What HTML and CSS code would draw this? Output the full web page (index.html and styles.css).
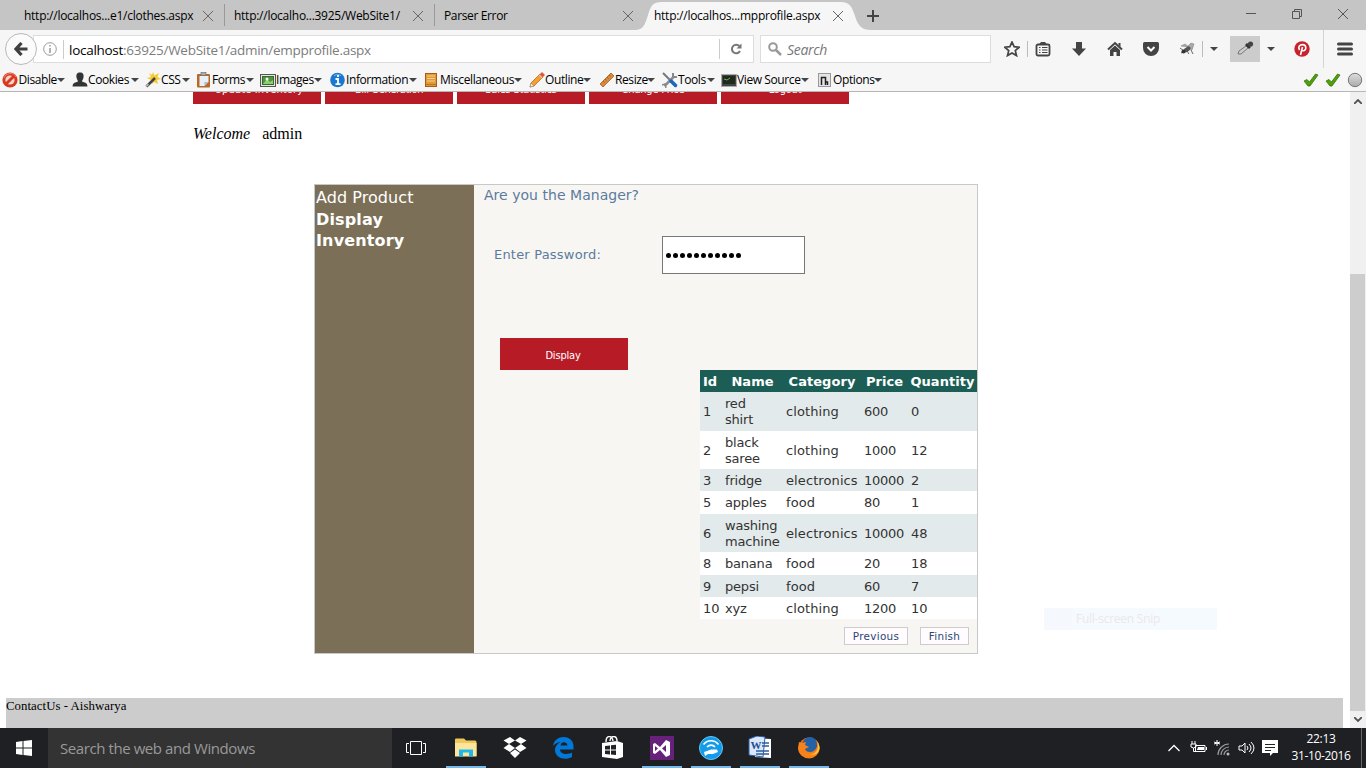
FILE: index.html
```html
<!DOCTYPE html>
<html lang="en">
<head>
<meta charset="utf-8">
<title>empprofile.aspx</title>
<link rel="stylesheet" href="styles.css">
</head>
<body>
<div class="screen">
<header class="tabs">
  <div class="tab t1"><span class="tt">http://localhos...e1/clothes.aspx</span><svg class="x" viewBox="0 0 10 10"><path d="M0 0l10 10M10 0L0 10"/></svg></div>
  <div class="tab t2"><span class="tt">http://localho...3925/WebSite1/</span><svg class="x" viewBox="0 0 10 10"><path d="M0 0l10 10M10 0L0 10"/></svg></div>
  <div class="tab t3"><span class="tt">Parser Error</span><svg class="x" viewBox="0 0 10 10"><path d="M0 0l10 10M10 0L0 10"/></svg></div>
  <div class="tab t4"><svg class="tabbg" viewBox="0 0 236 28"><path d="M0 28C8 28 10 23 13 13C16 3 18 0 27 0H205C216 0 217 6 220 14C223 24 227 28 236 28Z" fill="#f6f6f6"/></svg><span class="tt">http://localhos...mpprofile.aspx</span><svg class="x" viewBox="0 0 10 10"><path d="M0 0l10 10M10 0L0 10"/></svg></div>
  <svg class="plus" viewBox="0 0 12 12"><path d="M6 0v12M0 6h12" stroke="#444" stroke-width="2"/></svg>
  <div class="winbtns">
    <svg viewBox="0 0 10 12"><path d="M0 5.500h10"/></svg>
    <svg viewBox="0 0 10 12"><path d="M.5 3.500h7v7h-7zM2.500 3.500v-2h7v7h-2"/></svg>
    <svg viewBox="0 0 10 12"><path d="M0 1l10 10M10 1L0 11"/></svg>
  </div>
</header>
<div class="navbar">
  <div class="back"><svg viewBox="0 0 14 14"><path d="M7.500 1L2 7l5.500 6M2.500 7H13.500" fill="none" stroke="#404040" stroke-width="3.200"/></svg></div>
  <div class="url">
    <svg class="info" viewBox="0 0 14 14"><circle cx="7" cy="7" r="6.300" fill="none" stroke="#999"/><path d="M7 6v5M7 3v1.600" stroke="#888" stroke-width="1.300"/></svg>
    <span class="address"><b>localhost</b>:63925/WebSite1/admin/empprofile.aspx</span>
    <div class="reload"><svg viewBox="0 0 12 12"><path d="M9.500 3.200A4.300 4.300 0 1 0 10 8" fill="none" stroke="#777" stroke-width="2"/><path d="M11.500 .500v5h-5z" fill="#777"/></svg></div>
  </div>
  <div class="search"><svg viewBox="0 0 14 14"><circle cx="5" cy="5" r="3.800" fill="none" stroke="#999" stroke-width="2"/><path d="M8 8l5 5" stroke="#999" stroke-width="2.500"/></svg><i>Search</i></div>
  <div class="tools">
    <svg viewBox="0 0 16 16"><path d="M8 1l2.100 4.700 5.100.500-3.900 3.400 1.200 5L8 12l-4.500 2.600 1.200-5L.800 6.200l5.100-.500z" fill="none" stroke="#444" stroke-width="1.700"/></svg>
    <span class="vline"></span>
    <svg viewBox="0 0 16 16"><rect x="1.500" y="3.500" width="13" height="11" rx="1.500" fill="none" stroke="#444" stroke-width="1.800"/><path d="M4 3.500L6 1h4l2 2.500z" fill="#444"/><path d="M4 6.500h1.500M7 6.500h5.500M4 9h1.500M7 9h5.500M4 11.500h1.500M7 11.500h5.500" stroke="#444" stroke-width="1.200"/></svg>
    <svg viewBox="0 0 16 16"><path d="M5 1h6v6.500h4L8 15 1 7.500h4z" fill="#444"/></svg>
    <svg viewBox="0 0 16 16"><path d="M1 8.500L8 2l7 6.500" fill="none" stroke="#444" stroke-width="2"/><path d="M3 9l5-4.500L13 9v6H9.500v-4h-3v4H3zM11.500 2h2v4l-2-2z" fill="#444"/></svg>
    <svg viewBox="0 0 16 16"><path d="M1.500 1h13q1.500 0 1.500 1.500v4.500a8 8 0 0 1-16 0V2.500q0-1.500 1.500-1.500z" fill="#444"/><path d="M4.500 6L8 9.500 11.500 6" fill="none" stroke="#fff" stroke-width="2"/></svg>
    <svg viewBox="0 0 16 16"><path d="M8 6l4-4 3 1-2 6zM2 5l4-2 4 3z" fill="#aaa" stroke="#777" stroke-width=".5"/><ellipse cx="8" cy="8.500" rx="4" ry="2.200" transform="rotate(-35 8 8.500)" fill="#555"/><path d="M1 7l4 3M2 12l4-2M12 9l2 4M8 10l2 3" stroke="#555" stroke-width=".9"/><circle cx="4.500" cy="10.500" r="2" fill="#333"/></svg>
    <span class="vline"></span><span class="tri"></span>
    <div class="dropper"><svg viewBox="0 0 18 16"><path d="M2 13l1-3 7-5 2 2-7 6z" fill="#ccc" stroke="#777"/><path d="M10 3l4 4M11 5l4-3" stroke="#333" stroke-width="2.800"/><circle cx="14.500" cy="3" r="2.600" fill="#444"/></svg></div>
    <span class="tri"></span>
    <svg viewBox="0 0 16 16"><circle cx="8" cy="8" r="7.700" fill="#c8232c"/><path d="M5.600 9C3.500 5.500 6 3.600 8.500 3.600c4.500 0 4 6.200.8 6.200-1 0-1.500-.7-1.500-.7M8.500 6L6.500 14" fill="none" stroke="#fff" stroke-width="1.600"/></svg>
    <span class="vline long"></span>
    <svg viewBox="0 0 16 16"><path d="M1.500 3h13M1.500 8h13M1.500 13h13" stroke="#444" stroke-width="3" stroke-linecap="round"/></svg>
  </div>
</div>
<div class="devbar">
  <div class="dev"><svg viewBox="0 0 16 16"><circle cx="8" cy="8" r="7.600" fill="#d83920"/><circle cx="8" cy="8" r="4.600" fill="#f9d8cb"/><path d="M4 12l8-8" stroke="#d83920" stroke-width="3"/><path d="M2 6a6.500 6.500 0 0 1 12-1" fill="none" stroke="#f08a70"/></svg><span class="w1">Disable</span></div>
  <div class="dev"><svg viewBox="0 0 16 16"><path d="M8 .500c3 0 4 2 3.500 5C11 8 10 8.500 10 9.500l4 1.500q1.500 1 1.500 3.500H.500Q.500 12 2 11l4-1.500C6 8.500 5 8 4.500 5.500 4 2.500 5 .500 8 .500z" fill="#333"/></svg><span class="w2">Cookies</span></div>
  <div class="dev"><svg viewBox="0 0 16 16"><path d="M8 0l1.500 3.500L14 1l-1.500 4L16 7l-4 1 1 4-4-2-2 2-1-4-4-2 4-1-2-4 3 2z" fill="#f5c932"/><path d="M1.500 14.500L10 6" stroke="#444" stroke-width="2.500"/><path d="M1 14.500l2.500-2.500" stroke="#aaa" stroke-width="2"/></svg><span class="w3">CSS</span></div>
  <div class="dev"><svg viewBox="0 0 16 16"><rect x="1" y="2" width="13" height="13.500" rx="1" fill="#b7692c"/><path d="M3.500 4h9v6l-4 4h-5z" fill="#e9f0f5"/><path d="M8.500 14v-4h4z" fill="#abc"/><rect x="5" y=".5" width="5" height="3" fill="#aaa" stroke="#666" stroke-width=".6"/></svg><span class="w4">Forms</span></div>
  <div class="dev"><svg viewBox="0 0 16 16"><rect x=".5" y="2.500" width="15" height="12" fill="#e5e5e5" stroke="#555"/><rect x="2.500" y="4.500" width="11" height="8" fill="#4b963d" stroke="#356e2b"/><path d="M3 12l4-5 3 3 3-2v4z" fill="#8fd070"/><circle cx="7" cy="7" r="1.500" fill="#fff"/></svg><span class="w5">Images</span></div>
  <div class="dev"><svg viewBox="0 0 16 16"><circle cx="7.500" cy="8" r="7.300" fill="#1b78ce"/><path d="M4 3.500a6 5 0 0 1 7 0" stroke="#6cb9ee" fill="none"/><path d="M5.500 7H8v5M5.500 12.200h5M8 3v2" fill="none" stroke="#fff" stroke-width="1.800"/></svg><span class="w6">Information</span></div>
  <div class="dev"><svg viewBox="0 0 16 16"><rect x="1.500" y="1.500" width="11" height="13" fill="#e09a38" stroke="#a85c16"/><path d="M3 4h8M3 6.500h8M3 9h8" stroke="#f7d08c"/><path d="M2 12.500h10" stroke="#b8722a"/></svg><span class="w7">Miscellaneous</span></div>
  <div class="dev"><svg viewBox="0 0 16 16"><path d="M1 15l1-4L11 2l3 3-9 9z" fill="#f5a02c" stroke="#b95b1b" stroke-width=".7"/><path d="M11 2l2-2 3 3-2 2z" fill="#dc5548"/><path d="M10 3l3 3" stroke="#ccc"/><path d="M1 15l4-1-3-3z" fill="#fff0c9" stroke="#777" stroke-width=".5"/></svg><span class="w8">Outline</span></div>
  <div class="dev"><svg viewBox="0 0 16 16"><path d="M1 12L12 1l3 3L4 15z" fill="#d78a3d" stroke="#b37334"/><path d="M4 9l1.500 1.500M6 7l1.500 1.500M8 5l1.500 1.500M10 3l1.500 1.500" stroke="#805020" stroke-width=".6"/></svg><span class="w9">Resize</span></div>
  <div class="dev"><svg viewBox="0 0 16 16"><path d="M1 1l9 9" stroke="#777" stroke-width="2"/><path d="M2.500 14l9-9" stroke="#8b8b8b" stroke-width="2.500"/><path d="M11 1v4h4" fill="none" stroke="#888" stroke-width="2"/><path d="M0 13l3-1 1 4" fill="none" stroke="#888" stroke-width="1.500"/><path d="M9 9l4.500 4.500" stroke="#1c67b8" stroke-width="3.500" stroke-linecap="round"/></svg><span class="w10">Tools</span></div>
  <div class="dev"><svg viewBox="0 0 16 16"><rect x=".5" y="2.500" width="15" height="12" fill="#444" stroke="#aaa"/><rect x="2" y="4" width="12" height="8" fill="#1e2a1c"/><path d="M3 7l3 1 3-2" stroke="#73ac5b" fill="none"/></svg><span class="w11">View Source</span></div>
  <div class="dev"><svg viewBox="0 0 16 16"><rect x="1.500" y="1.500" width="12" height="13" fill="#e5e5e5" stroke="#999"/><path d="M4.500 13V5.500h4V13M8.500 10h2v3" fill="none" stroke="#222" stroke-width="1.500"/></svg><span class="w12">Options</span></div>
  <div class="status">
    <svg viewBox="0 0 16 16"><path d="M1 9l3-1.500 2.500 2.500 6-8L15 3 7 14H5z" fill="#4fa00c" stroke="#337505" stroke-width=".8"/></svg>
    <svg viewBox="0 0 16 16"><path d="M1 9l3-1.500 2.500 2.500 6-8L15 3 7 14H5z" fill="#4fa00c" stroke="#337505" stroke-width=".8"/></svg>
    <svg viewBox="0 0 16 16"><defs><linearGradient id="orb" x2="0" y2="1"><stop stop-color="#ddd"/><stop offset="1" stop-color="#aaa"/></linearGradient></defs><circle cx="8" cy="8" r="6.700" fill="url(#orb)" stroke="#777"/></svg>
  </div>
</div>
<div class="viewport">
  <main class="page">
    <nav class="menu"><a class="wide">Update Inventory</a><a class="tight">Bill Generation</a><a>Sales Statistics</a><a>Change Price</a><a>Logout</a></nav>
    <p class="welcome"><em>Welcome</em><span>admin</span></p>
    <section class="wizard">
      <aside class="side"><a>Add Product</a><a><b>Display<br>Inventory</b></a></aside>
      <div class="step">
        <h1>Are you the Manager?</h1>
        <div class="field"><label>Enter Password:</label><div class="pw"><span></span><span></span><span></span><span></span><span></span><span></span><span></span><span></span><span></span><span></span><span></span></div></div>
        <button class="display">Display</button>
        <table>
          <colgroup><col class="c1"><col class="c2"><col class="c3"><col class="c4"><col class="c5"></colgroup>
          <tr class="head"><th>Id</th><th>Name</th><th>Category</th><th>Price</th><th>Quantity</th></tr>
          <tr class="alt h39"><td>1</td><td>red<br>shirt</td><td>clothing</td><td>600</td><td>0</td></tr>
          <tr class="h38"><td>2</td><td>black<br>saree</td><td>clothing</td><td>1000</td><td>12</td></tr>
          <tr class="alt"><td>3</td><td>fridge</td><td>electronics</td><td>10000</td><td>2</td></tr>
          <tr class="h23"><td>5</td><td>apples</td><td>food</td><td>80</td><td>1</td></tr>
          <tr class="alt h38"><td>6</td><td>washing<br>machine</td><td>electronics</td><td>10000</td><td>48</td></tr>
          <tr class="h23"><td>8</td><td>banana</td><td>food</td><td>20</td><td>18</td></tr>
          <tr class="alt"><td>9</td><td>pepsi</td><td>food</td><td>60</td><td>7</td></tr>
          <tr><td>10</td><td>xyz</td><td>clothing</td><td>1200</td><td>10</td></tr>
        </table>
        <div class="actions"><button class="prev">Previous</button><button class="fin">Finish</button></div>
      </div>
    </section>
    <footer class="contact">ContactUs - Aishwarya</footer>
  </main>
  <div class="scroll"><svg viewBox="0 0 8 5"><path d="M0 5l4-4 4 4"/></svg><div class="thumb"></div><svg viewBox="0 0 8 5"><path d="M0 0l4 4 4-4"/></svg></div>
  <div class="snip">Full-screen Snip</div>
</div>
<div class="taskbar">
  <div class="start"><svg viewBox="0 0 16 16"><path d="M0 2l6.500-.9v6.400H0zM7.500 1L16 0v7.500H7.500zM0 8.500h6.500v6.400L0 14zM7.500 8.500H16V16l-8.500-1z" fill="#fff"/></svg></div>
  <div class="tsearch">Search the web and Windows</div>
  <div class="tview"><svg viewBox="0 0 20 14"><path d="M4.500.500h11v13h-11zM3 2.500H.500v9H3M17 2.500h2.500v9H17" fill="none" stroke="#fff"/></svg></div>
  <div class="apps">
    <div class="app on"><svg viewBox="0 0 24 24"><path d="M1 3.500q0-1 1-1h8l2 2h9q1.500 0 1.500 1.500V20H1z" fill="#f0c95c"/><path d="M1 7h21.500v13.500H1z" fill="#fde69b"/><path d="M5 20.500v-7h14v7h-4v-4H9v4z" fill="#1bb9ef"/></svg></div>
    <div class="app"><svg viewBox="0 0 24 24"><path d="M7 1l5 3.500L6 8 .500 4.500zM17 1l-5 3.500L18 8l5.500-3.500zM6 8l6 4-5 4-6.500-4zM18 8l-6 4 5 4 6.500-4zM12 13.500l5 3.500-5 5-5-5z" fill="#fff"/></svg></div>
    <div class="app"><svg viewBox="0 0 24 24"><path d="M1 10C2.500-2 21-2 21.500 10v3.500H8c0 5 8 5.500 12 3V21C13 25 3 22 3 14c0-4 3-7 6-8-5 0-8 4-8 4zm7.500-.500h7C15 5 9 5 8.500 9.500z" fill="#0078d7"/></svg></div>
    <div class="app"><svg viewBox="0 0 24 24"><path d="M1 7l15-2 6 2v14l-6 2-15-2z" fill="#fff"/><path d="M5 6C5-1 11-1 12 5M9 5c0-6 7-6 7 0" fill="none" stroke="#fff" stroke-width="1.400"/><path d="M4 10l5-.500v4H4zM10 9.300l5-.500v4.700h-5zM4 14.500h5v4L4 18zM10 14.500h5v4.500l-5-.500z" fill="#202225"/></svg></div>
    <div class="app on"><svg viewBox="0 0 24 24"><path d="M0 0h24v24H0z" fill="#68217a"/><path d="M3 8l2-1 5 4 6-7 4 2v13l-4 2-6-7-5 4-2-1zm2 2v5l3-2.500zm7 2.500l4 3.500V9z" fill="#fff"/></svg></div>
    <div class="app on"><svg viewBox="0 0 24 24"><circle cx="12" cy="12" r="11.500" fill="#159bea" stroke="#65c7f4"/><path d="M4.500 8.500c4-5 11-5 15 0M8 11c2.500-2.500 6-2.500 8 0" fill="none" stroke="#fff" stroke-width="1.700"/><path d="M5 16l3-1 4-1.500h6l1 2.500-5 2H9l-3 2z" fill="#fff"/></svg></div>
    <div class="app on"><svg viewBox="0 0 24 24"><path d="M7 2l16 1v19l-16-1z" fill="#fff"/><path d="M1 3l8-3 8 1-2 20-14-2z" fill="#dae7f8" stroke="#2d5eac"/><text x="2.500" y="13" class="word">W</text><path d="M14 7h7M14 10h7M8 15h13M8 18h13" stroke="#315c9c" stroke-width="1.700"/></svg></div>
    <div class="app on"><svg viewBox="0 0 24 24"><circle cx="12" cy="12" r="10.500" fill="#e96b16"/><circle cx="13" cy="8.500" r="7.500" fill="#2462a5"/><path d="M2 6l3 1 4-1-1 3 4 2-4 2c1 4 8 5 11 0 2-3 1-7 0-9 5 5 5 12-1 16C11 25 1 20 1 12z" fill="#f68219"/><path d="M20 5c3 8-1 13-7 14 9 1 12-7 7-14z" fill="#ffc43a"/></svg></div>
  </div>
  <div class="tray">
    <svg viewBox="0 0 14 16"><path d="M1.500 11L7 5.500l5.500 5.500" fill="none" stroke="#fff" stroke-width="1.300"/></svg>
    <svg class="battery" viewBox="0 0 17 16"><path d="M5.500 5.500h9.500v6H5.500zM16.500 7v3M1 4h5v3q-2.500 2-5 0zM2 1v3M5 1v3M3.500 8v3.500H6" fill="none" stroke="#fff"/><path d="M8 7h6v3H7z" fill="#fff"/></svg>
    <svg class="wifi" viewBox="0 0 17 16"><path d="M3 0v6M0 2l6 2M6 2L0 4" stroke="#fff"/><path d="M4 15A11 11 0 0 1 15 4M7 15a8 8 0 0 1 8-8M10 15a5 5 0 0 1 5-5" fill="none" stroke="#999" stroke-width="1.200"/><circle cx="14" cy="14" r="1.500" fill="#bbb"/></svg>
    <svg class="sound" viewBox="0 0 17 16"><path d="M1 6h3l3-3v10l-3-3H1zM9 6q2 2 0 4M11 4q4 4 0 8M13 2q6 6 0 12" fill="none" stroke="#fff"/></svg>
    <svg class="note" viewBox="0 0 17 16"><path d="M0 0h16v13h-5l-3 3v-3H0z" fill="#fff"/><path d="M3 4.500h10M3 7.500h10M3 10.500h6" stroke="#222"/></svg>
    <div class="clock"><span>22:13</span><span>31-10-2016</span></div>
    <span class="peek"></span>
  </div>
</div>
</div>
</body>
</html>
```
FILE: styles.css
```css
*{box-sizing:border-box}
body{margin:0;font-family:"Open Sans","Noto Sans",sans-serif;font-size:12px;color:#000}
svg{display:block;flex:none}
button{border-radius:0;padding:0}
.screen{width:1366px;height:768px;display:flex;flex-direction:column;overflow:hidden;background:#fff}
.tabs{height:30px;flex:none;background:#c5c5c5;display:flex;align-items:center}
.tab{height:30px;display:flex;align-items:center;position:relative;flex:none}
.tt{white-space:nowrap;position:relative;line-height:16px;margin-top:2px;letter-spacing:-.26px}
.x{width:10px;height:10px;margin-top:1px;position:relative}
.x path{stroke:#666;fill:none}
.t1{width:224px;padding-left:24px}.t1 .tt{width:179px}
.t2{width:210px;padding-left:10px}.t2 .tt{width:179px}
.t3{width:210px;padding-left:10px}.t3 .tt{width:179px;letter-spacing:-.36px}
.t1::after,.t2::after{content:"";width:1px;height:22px;background:#999;margin:0 -1px 0 auto}
.t4{width:222px;padding-left:10px}.t4 .tt{width:179px}
.tabbg{position:absolute;left:-9px;bottom:0;width:236px;height:28px}
.plus{width:12px;height:12px;margin-left:1px;margin-top:2px}
.winbtns{display:flex;gap:36px;margin-left:auto;margin-right:18px;margin-top:-2px}
.winbtns svg{width:10px;height:12px}.winbtns path{fill:none;stroke:#555}
.navbar{height:38px;flex:none;background:#f6f6f6;display:flex;align-items:center;padding-left:5px}
.back{width:32px;height:32px;flex:none;border:1px solid #b9b9b9;border-radius:50%;background:#fbfbfb;display:flex;align-items:center;justify-content:center;z-index:1}
.back svg{width:14px;height:14px}
.url{width:721px;height:28px;margin-left:-4px;border:1px solid #ddd;background:#fff;display:flex;align-items:center;flex:none;font-size:13.5px}
.info{width:14px;height:14px;margin-left:9px}
.address{margin-left:6px;border-left:1px solid #ccc;padding:1px 0 0 5px;color:#7c7c7c;white-space:nowrap;line-height:18px;letter-spacing:-.28px}
.address b{color:#000;font-weight:400}
.reload{margin-left:auto;width:34px;height:20px;border-left:1px solid #ccc;display:flex;align-items:center;padding-left:10px}
.reload svg{width:12px;height:12px}
.search{width:231px;height:28px;margin-left:6px;flex:none;border:1px solid #ddd;background:#fff;display:flex;align-items:center;padding-left:7px;font-size:14px;color:#777}
.search svg{width:14px;height:14px;margin-right:5px}.search i{letter-spacing:-.3px;padding-top:1px}
.tools{display:flex;align-items:center;margin-left:13px}
.tools>svg{width:16px;height:16px}
.tools>svg:nth-child(3){margin-left:7px}
.tools>svg:nth-child(n+4):nth-child(-n+7){margin-left:20px}
.vline{width:1px;height:16px;background:#bbb;margin-left:7px}
.tri{border:4px solid transparent;border-top-color:#444;border-bottom:0;margin-left:7px;width:0}
.dropper{width:30px;height:26px;background:#ccc;margin-left:12px;display:flex;align-items:center;justify-content:center}
.dropper svg{width:18px;height:16px}
.dropper+.tri+svg{margin-left:19px}
.vline.long{height:38px;margin-left:13px;background:#d4d4d4}
.long+svg{margin-left:13px}
.devbar{height:24px;flex:none;background:#f6f6f6;border-bottom:1px solid #b7b7b7;display:grid;grid-template-columns:70px 73px 51px 64px 70px 94px 105px 70px 63px 59px 96px 80px 1fr;padding-left:3px;align-items:center}
.dev{display:flex;align-items:center;white-space:nowrap;height:23px}
.dev svg{width:16px;height:16px;margin-left:-1px}
.dev span{line-height:16px;margin:0;flex:none;letter-spacing:-.4px}
.dev::after{content:"";border:4px solid transparent;border-top-color:#444;border-bottom:0}
.w1{width:39px}.w2{width:42.5px}.w3{width:21px}.w4{width:33.5px}.w5{width:38px}.w6{width:63px}.w7{width:74px}.w8{width:38px}.w9{width:32px}.w10{width:28.5px}.w11{width:64px}.w12{width:41px}
.dev .w1{padding-left:.5px}
.status{display:flex;gap:6px;justify-content:flex-end;padding-right:3px}.status svg{width:16px;height:16px}
.viewport{height:636px;flex:none;display:flex;position:relative;overflow:hidden}
.page{width:1350px;flex:none;display:flex;flex-direction:column;align-items:flex-start}
.menu{display:flex;gap:4px;margin:-20px 0 0 193px}
.menu a,.display{width:128px;height:32px;background:#b71c26;color:#fff;font:11px "DejaVu Sans Condensed","DejaVu Sans",sans-serif;font-stretch:condensed;letter-spacing:-.2px;line-height:36px;text-align:center;border:0}
.menu .wide{letter-spacing:.15px;padding-left:4px}
.menu .tight{letter-spacing:-.35px}
.display{padding-right:2px;line-height:34px;padding-top:1px}
.welcome{margin:20px 0 0 193px;font:16px/20px "Liberation Serif",serif;display:flex;gap:12px}
.wizard{width:664px;height:470px;margin:40px 0 0 314px;border:1px solid #c8c8c8;display:flex;background:#f7f6f3;font-family:"DejaVu Sans",sans-serif}
.side{width:159px;flex:none;background:#7c6f57;color:#fff;padding:2px 1px;font-size:16px;line-height:21.500px;display:flex;flex-direction:column;letter-spacing:.06px}
.side b{letter-spacing:.15px}
.step{width:503px;display:flex;flex-direction:column;align-items:flex-start}
h1{font-size:14px;line-height:20px;font-weight:400;color:#5d7b9d;margin:0 0 0 10px;letter-spacing:.03px}
.field{display:flex;align-items:center;margin:31px 0 0 20px;height:38px;color:#5d7b9d;font-size:13px}
.field label{width:168px;letter-spacing:.2px;padding-bottom:2px}
.pw{width:143px;height:38px;border:1px solid #777;background:#fff;display:flex;align-items:center;gap:2px;padding-left:3px}
.pw span{width:5px;height:5px;border-radius:50%;background:#000;margin-top:1px}
.display{margin:64px 0 0 26px}
table{width:277px;align-self:flex-end;border-collapse:collapse;table-layout:fixed;font-size:13px;line-height:16px;color:#333;background:#fff}
.c1{width:22px}.c2{width:61px}.c3{width:78px}.c4{width:47px}.c5{width:69px}
td,th{padding:1px 0 0 3px;text-align:left;white-space:nowrap;letter-spacing:-.08px}
td:nth-child(2){letter-spacing:-.2px}td:nth-child(3){letter-spacing:.1px}td:nth-child(4){letter-spacing:-.25px}
tr{height:22px}
.head{background:#1c5e55;color:#fff}.head th{text-align:center;padding:1px 0 0;letter-spacing:.05px}.head th:first-child{padding-right:2px}
.alt{background:#e3eaeb}.h39{height:39px}.h38{height:38px}.h23{height:23px}
.actions{display:flex;gap:12px;align-self:flex-end;margin:8px 8px 0 0}
.actions button{height:18px;border:1px solid #ccc;background:#fffbff;color:#284775;font:10.400px/16px "DejaVu Sans",sans-serif;letter-spacing:.3px}
.prev{width:64px}.fin{width:49px}
.contact{width:1337px;height:30px;margin:44px 0 0 6px;background:#ccc;font:12.800px/17px "Liberation Serif",serif;letter-spacing:.05px}
.scroll{width:16px;background:#f0f0f0;display:flex;flex-direction:column;align-items:center;padding:7px 0 6px}
.scroll svg{width:8px;height:5px}.scroll path{fill:none;stroke:#505050;stroke-width:1.800}
.thumb{width:15px;height:437px;background:#cdcdcd;margin:170px 1px 0 0}.thumb+svg{margin-top:auto}
.snip{position:absolute;left:1044px;top:516px;width:173px;height:22px;background:linear-gradient(90deg,#f5f9fe 28px,#f5fafe 28px);color:#ece8e8;line-height:22px;padding-left:32px;letter-spacing:-.25px}
.taskbar{height:40px;flex:none;background:#1e2023;display:flex;align-items:center}
.start{width:48px;display:flex;justify-content:center}.start svg{width:16px;height:16px}
.tsearch{width:344px;height:40px;background:#333;color:#999;font-size:15px;line-height:41px;padding-left:12px;letter-spacing:-.42px}
.tview{width:48px;display:flex;justify-content:center}.tview svg{width:20px;height:14px}
.apps{display:flex;gap:9px;margin-left:6px}
.app{width:40px;height:40px;display:flex;justify-content:center;padding-top:8px;border-bottom:2px solid transparent}
.app.on{border-bottom-color:#76b9ed}.app svg{width:24px;height:24px}
.word{font:bold 11px "Liberation Serif",serif;fill:#244e91}
.tray{margin-left:auto;display:flex;align-items:center;color:#fff;height:40px}
.tray svg{width:17px;height:16px}.tray svg:first-child{width:14px;margin-right:9px}
.tray .battery{margin-right:7px}.tray .wifi{margin-right:7px}.tray .sound{margin-right:7px}
.clock{width:80px;margin-left:2px;display:flex;flex-direction:column;align-items:center;line-height:17px;letter-spacing:-.35px;padding-bottom:2px}
.peek{width:1px;height:40px;background:#666;margin:0 4px 0 0}
```
